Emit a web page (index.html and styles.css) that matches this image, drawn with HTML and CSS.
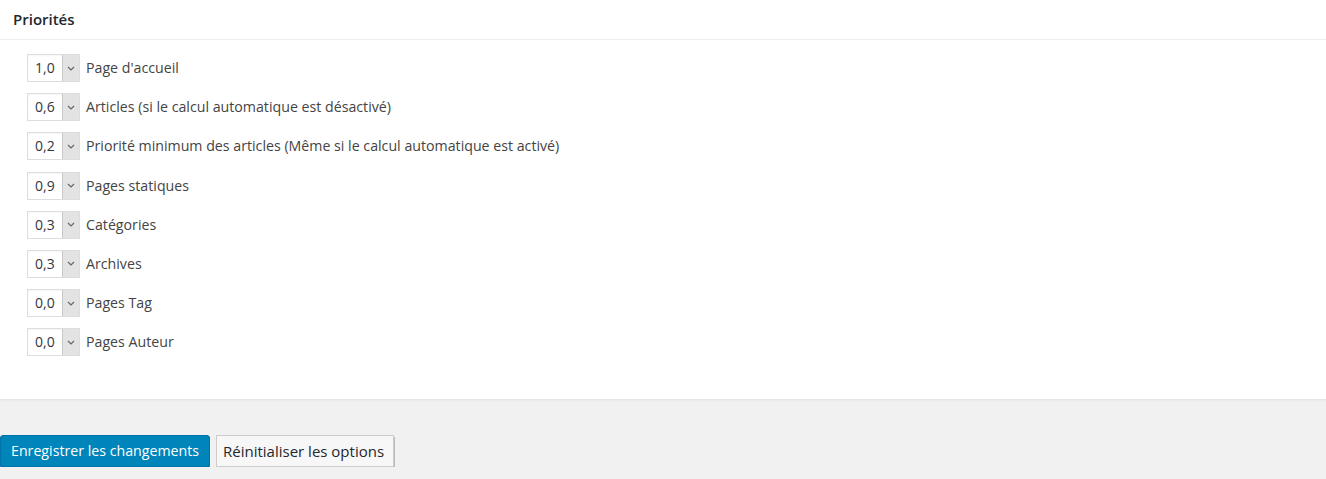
FILE: index.html
```html
<!DOCTYPE html>
<html lang="fr">
<head>
<meta charset="utf-8">
<title>Priorités</title>
<link rel="stylesheet" href="styles.css">
</head>
<body>
<div class="postbox">
  <h2 class="hndle">Priorités</h2>
  <ul class="prio-list">
    <li class="row"><span class="sel"><span class="val">1,0</span><span class="arrow"><svg width="8" height="5" viewBox="0 0 8 5"><path d="M1 1l3 3 3-3" fill="none" stroke="#666" stroke-width="1.2"/></svg></span></span><span class="lbl">Page d'accueil</span></li>
    <li class="row"><span class="sel"><span class="val">0,6</span><span class="arrow"><svg width="8" height="5" viewBox="0 0 8 5"><path d="M1 1l3 3 3-3" fill="none" stroke="#666" stroke-width="1.2"/></svg></span></span><span class="lbl">Articles (si le calcul automatique est désactivé)</span></li>
    <li class="row"><span class="sel"><span class="val">0,2</span><span class="arrow"><svg width="8" height="5" viewBox="0 0 8 5"><path d="M1 1l3 3 3-3" fill="none" stroke="#666" stroke-width="1.2"/></svg></span></span><span class="lbl">Priorité minimum des articles (Même si le calcul automatique est activé)</span></li>
    <li class="row"><span class="sel"><span class="val">0,9</span><span class="arrow"><svg width="8" height="5" viewBox="0 0 8 5"><path d="M1 1l3 3 3-3" fill="none" stroke="#666" stroke-width="1.2"/></svg></span></span><span class="lbl">Pages statiques</span></li>
    <li class="row"><span class="sel"><span class="val">0,3</span><span class="arrow"><svg width="8" height="5" viewBox="0 0 8 5"><path d="M1 1l3 3 3-3" fill="none" stroke="#666" stroke-width="1.2"/></svg></span></span><span class="lbl">Catégories</span></li>
    <li class="row"><span class="sel"><span class="val">0,3</span><span class="arrow"><svg width="8" height="5" viewBox="0 0 8 5"><path d="M1 1l3 3 3-3" fill="none" stroke="#666" stroke-width="1.2"/></svg></span></span><span class="lbl">Archives</span></li>
    <li class="row"><span class="sel"><span class="val">0,0</span><span class="arrow"><svg width="8" height="5" viewBox="0 0 8 5"><path d="M1 1l3 3 3-3" fill="none" stroke="#666" stroke-width="1.2"/></svg></span></span><span class="lbl">Pages Tag</span></li>
    <li class="row"><span class="sel"><span class="val">0,0</span><span class="arrow"><svg width="8" height="5" viewBox="0 0 8 5"><path d="M1 1l3 3 3-3" fill="none" stroke="#666" stroke-width="1.2"/></svg></span></span><span class="lbl">Pages Auteur</span></li>
  </ul>
</div>
<div class="actions">
  <button class="btn btn-primary" type="button">Enregistrer les changements</button>
  <button class="btn btn-secondary" type="button">Réinitialiser les options</button>
</div>
</body>
</html>
```
FILE: styles.css
```css
html, body {
  margin: 0;
  padding: 0;
}
body {
  background: #f1f1f1;
  font-family: "Open Sans", "Liberation Sans", sans-serif;
  font-size: 13px;
  color: #444;
}
.postbox {
  background: #fff;
  border-bottom: 1px solid #e5e5e5;
  box-shadow: 0 1px 2px rgba(0,0,0,0.04);
  height: 400px;
  box-sizing: border-box;
}
.hndle {
  margin: 0;
  height: 40px;
  box-sizing: border-box;
  border-bottom: 1px solid #eee;
  padding: 9px 13px 0;
  font-size: 15px;
  font-weight: 600;
  color: #23282d;
  line-height: 20px;
}
.prio-list {
  list-style: none;
  margin: 0;
  padding: 14px 0 0 27px;
  display: flex;
  flex-direction: column;
  gap: 11.2px;
}
.row {
  display: flex;
  align-items: center;
  height: 28px;
  gap: 6px;
}
.sel {
  display: flex;
  height: 28px;
  box-sizing: border-box;
  border: 1px solid #ddd;
  box-shadow: inset 0 1px 2px rgba(0,0,0,0.04);
  background: #fff;
}
.val {
  width: 34px;
  box-sizing: border-box;
  padding-left: 7px;
  line-height: 26px;
  font-size: 14px;
  color: #32373c;
}
.arrow {
  width: 16px;
  background: #e3e3e3;
  border-left: 1px solid #c8c8c8;
  display: flex;
  align-items: center;
  justify-content: center;
}
.lbl {
  font-size: 14.2px;
  color: #444;
  line-height: 20px;
}
.actions {
  padding: 35px 0 0 0;
  display: flex;
  gap: 6px;
}
.btn {
  font-family: "Open Sans", "Liberation Sans", sans-serif;
  font-size: 14px;
  height: 32px;
  line-height: 30px;
  border-radius: 3px;
  padding: 0 10px;
  margin: 0;
  cursor: pointer;
  white-space: nowrap;
}
.btn-primary {
  background: #0085ba;
  border: 1px solid #0073aa;
  color: #fff;
  box-shadow: 0 1px 0 #006799;
  width: 210px;
  font-size: 14.2px;
  padding: 0 10px;
  text-align: left;
}
.btn-secondary {
  background: #f7f7f7;
  border: 1px solid #ccc;
  color: #23282d;
  box-shadow: 1px 2px 0 #bbb;
  border-radius: 0;
  width: 178px;
  font-size: 15px;
  padding: 0 6px;
  text-align: left;
}
```
